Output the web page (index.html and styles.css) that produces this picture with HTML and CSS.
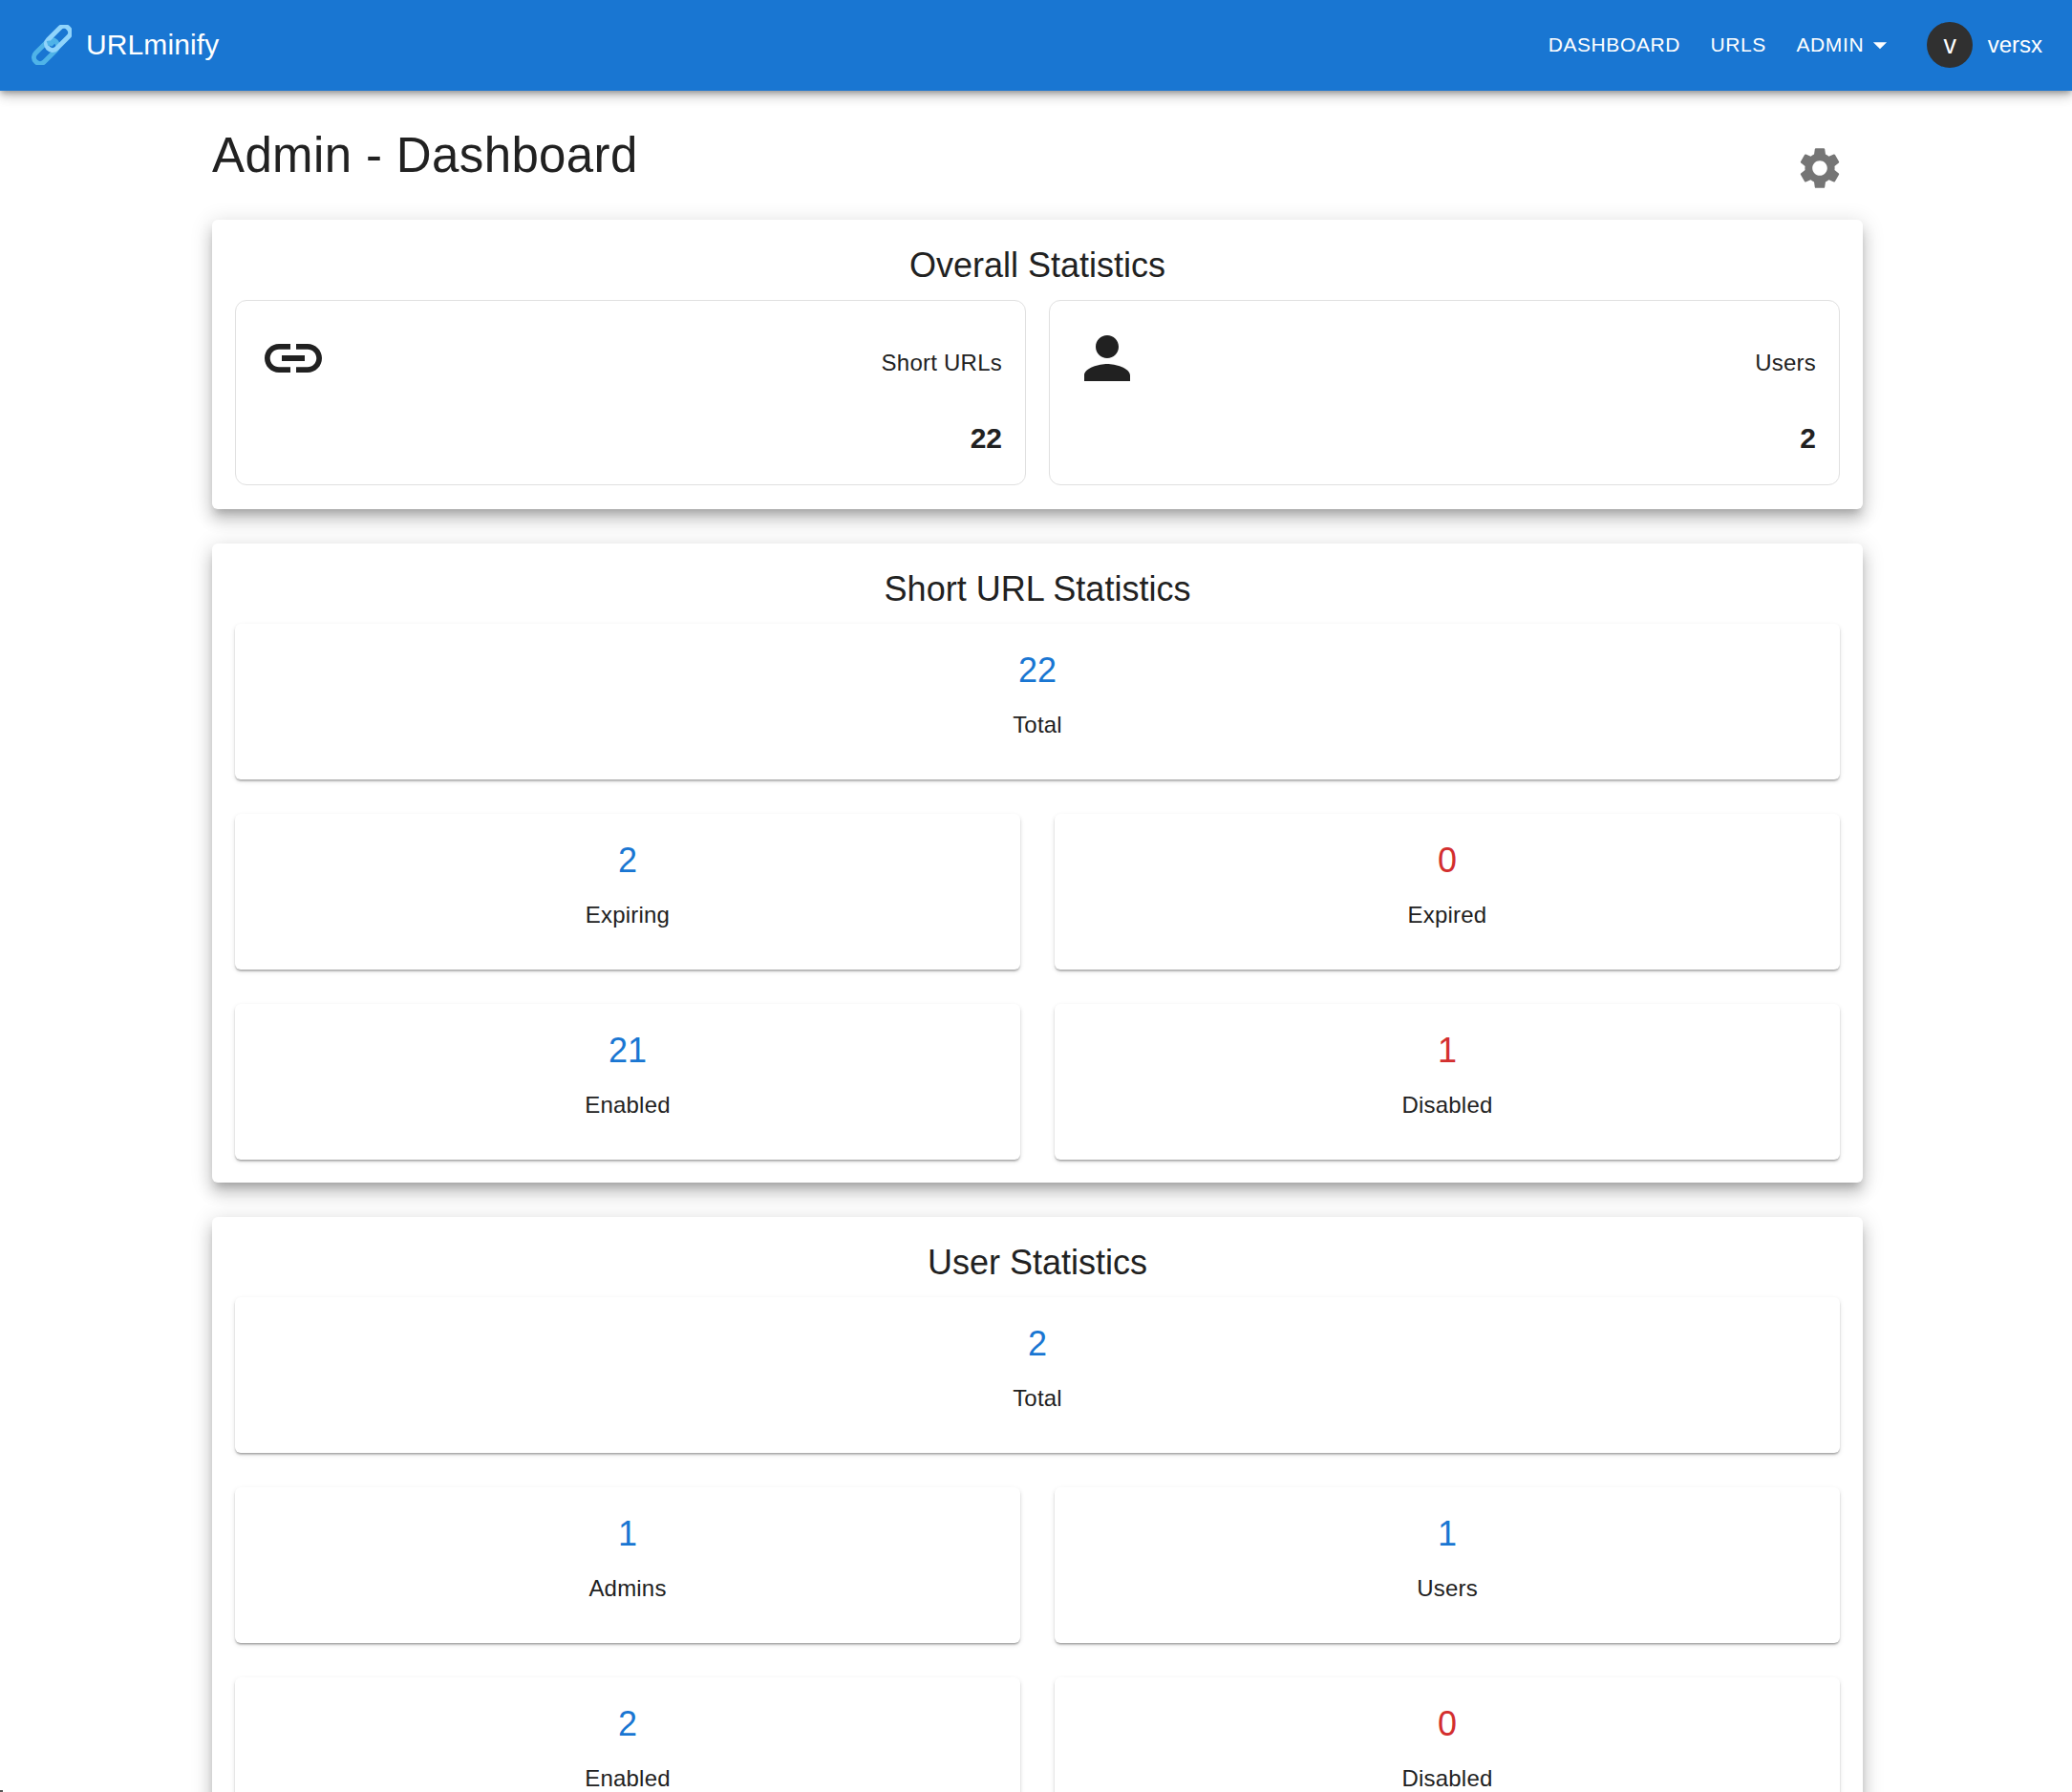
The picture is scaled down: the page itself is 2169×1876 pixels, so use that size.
FILE: index.html
```html
<!DOCTYPE html>
<html lang="en">
<head>
    <meta charset="UTF-8">
    <meta name="viewport" content="width=device-width, initial-scale=1.0">
    <title>URLminify - Admin Dashboard</title>
    <link rel="stylesheet" href="styles.css">
</head>
<body>
    <header class="appbar">
        <a class="brand" href="#">
            <svg class="brand-icon" viewBox="0 0 42 42">
                <rect class="link-back" x="-15" y="-6.5" width="30" height="13" rx="6.5" transform="translate(15 28) rotate(-45)" />
                <rect class="link-front" x="-15" y="-6.5" width="30" height="13" rx="6.5" transform="translate(28 14) rotate(-45)" />
                <path class="link-hook" d="M16.5 19.5 A6.5 6.5 0 0 1 23 21" />
            </svg>
            <span>URLminify</span>
        </a>
        <nav class="nav">
            <a href="#">Dashboard</a>
            <a href="#">URLs</a>
            <a class="nav-drop" href="#">Admin
                <svg viewBox="0 0 24 24"><path d="M7 10l5 5 5-5z" /></svg>
            </a>
        </nav>
        <div class="user">
            <span class="avatar">v</span>
            <span class="user-name">versx</span>
        </div>
    </header>

    <main class="page">
        <div class="title-row">
            <h1>Admin - Dashboard</h1>
            <svg class="gear" viewBox="0 0 24 24" aria-label="Settings">
                <path d="M19.14 12.94c.04-.3.06-.61.06-.94 0-.32-.02-.64-.07-.94l2.03-1.58c.18-.14.23-.41.12-.61l-1.92-3.32c-.12-.22-.37-.29-.59-.22l-2.39.96c-.5-.38-1.03-.7-1.62-.94l-.36-2.54c-.04-.24-.24-.41-.48-.41h-3.84c-.24 0-.43.17-.47.41l-.36 2.54c-.59.24-1.13.57-1.62.94l-2.39-.96c-.22-.08-.47 0-.59.22L2.74 8.87c-.12.21-.08.47.12.61l2.03 1.58c-.05.3-.09.63-.09.94s.02.64.07.94l-2.03 1.58c-.18.14-.23.41-.12.61l1.92 3.32c.12.22.37.29.59.22l2.39-.96c.5.38 1.03.7 1.62.94l.36 2.54c.05.24.24.41.48.41h3.84c.24 0 .44-.17.47-.41l.36-2.54c.59-.24 1.13-.56 1.62-.94l2.39.96c.22.08.47 0 .59-.22l1.92-3.32c.12-.22.07-.47-.12-.61l-2.01-1.58zM12 15.6c-1.98 0-3.6-1.62-3.6-3.6s1.62-3.6 3.6-3.6 3.6 1.62 3.6 3.6-1.62 3.6-3.6 3.6z" />
            </svg>
        </div>

        <section class="panel">
            <h2>Overall Statistics</h2>
            <div class="count-grid">
                <div class="count-card">
                    <div class="count-head">
                        <svg viewBox="0 0 24 24"><path d="M3.9 12c0-1.71 1.39-3.1 3.1-3.1h4V7H7c-2.76 0-5 2.24-5 5s2.24 5 5 5h4v-1.9H7c-1.71 0-3.1-1.39-3.1-3.1zM8 13h8v-2H8v2zm9-6h-4v1.9h4c1.71 0 3.1 1.39 3.1 3.1s-1.39 3.1-3.1 3.1h-4V17h4c2.76 0 5-2.24 5-5s-2.24-5-5-5z" /></svg>
                        <span>Short URLs</span>
                    </div>
                    <div class="count-value">22</div>
                </div>
                <div class="count-card">
                    <div class="count-head">
                        <svg viewBox="0 0 24 24"><path d="M12 12c2.21 0 4-1.79 4-4s-1.79-4-4-4-4 1.79-4 4 1.79 4 4 4zm0 2c-2.67 0-8 1.34-8 4v2h16v-2c0-2.66-5.33-4-8-4z" /></svg>
                        <span>Users</span>
                    </div>
                    <div class="count-value">2</div>
                </div>
            </div>
        </section>

        <section class="panel">
            <h2>Short URL Statistics</h2>
            <div class="stat-grid">
                <div class="stat stat-wide"><div class="stat-num">22</div><div class="stat-label">Total</div></div>
                <div class="stat"><div class="stat-num">2</div><div class="stat-label">Expiring</div></div>
                <div class="stat"><div class="stat-num red">0</div><div class="stat-label">Expired</div></div>
                <div class="stat"><div class="stat-num">21</div><div class="stat-label">Enabled</div></div>
                <div class="stat"><div class="stat-num red">1</div><div class="stat-label">Disabled</div></div>
            </div>
        </section>

        <section class="panel">
            <h2>User Statistics</h2>
            <div class="stat-grid">
                <div class="stat stat-wide"><div class="stat-num">2</div><div class="stat-label">Total</div></div>
                <div class="stat"><div class="stat-num">1</div><div class="stat-label">Admins</div></div>
                <div class="stat"><div class="stat-num">1</div><div class="stat-label">Users</div></div>
                <div class="stat"><div class="stat-num">2</div><div class="stat-label">Enabled</div></div>
                <div class="stat"><div class="stat-num red">0</div><div class="stat-label">Disabled</div></div>
            </div>
        </section>
    </main>
    <div class="corner-speck"></div>
</body>
</html>
```

FILE: styles.css
```css
html {
    height: 100%;
    overflow: hidden;
}
body {
    margin: 0;
    height: 100%;
    overflow: hidden;
    background: #ffffff;
    color: #212121;
    font-family: "Liberation Sans", Arial, sans-serif;
    font-size: 24px;
    line-height: 36px;
}

/* top bar */
.appbar {
    position: relative;
    z-index: 2;
    display: flex;
    align-items: center;
    box-sizing: border-box;
    height: 95px;
    padding: 0 31px 1px 33px;
    background: #1976d2;
    color: #ffffff;
    box-shadow: 0 3px 6px -1px rgba(0, 0, 0, 0.3), 0 6px 12px 0 rgba(0, 0, 0, 0.14), 0 2px 15px 0 rgba(0, 0, 0, 0.12);
}
.brand {
    display: flex;
    align-items: center;
    gap: 15px;
    margin-right: auto;
    color: inherit;
    text-decoration: none;
    font-size: 30px;
    letter-spacing: 0.1px;
}
.brand-icon {
    width: 42px;
    height: 42px;
}
.link-back, .link-front, .link-hook {
    fill: none;
    stroke-width: 5;
}
.link-back { stroke: #4fb3e8; }
.link-front { stroke: #90d4fb; }
.link-hook { stroke: #4fb3e8; }
.nav {
    display: flex;
    align-items: center;
    gap: 31.5px;
}
.nav a {
    color: inherit;
    text-decoration: none;
    text-transform: uppercase;
    font-size: 21px;
    letter-spacing: 0.6px;
}
.nav-drop {
    display: flex;
    align-items: center;
}
.nav-drop svg {
    width: 34px;
    height: 34px;
    fill: #ffffff;
}
.user {
    display: flex;
    align-items: center;
    gap: 15.5px;
    margin-left: 32px;
}
.avatar {
    display: flex;
    align-items: center;
    justify-content: center;
    width: 48px;
    height: 48px;
    border-radius: 50%;
    background: #303030;
    font-size: 27px;
}

/* page */
.page {
    margin: 0 219px 0 222px;
}
.title-row {
    display: flex;
    justify-content: space-between;
    height: 135px;
}
.title-row h1 {
    margin: 38px 0 0;
    font-size: 51px;
    font-weight: 400;
    line-height: 60px;
    letter-spacing: 0.37px;
}
.gear {
    width: 52px;
    height: 52px;
    margin: 55px 19px 0 0;
    fill: #757575;
}
.panel {
    margin-bottom: 36px;
    padding: 24px;
    border-radius: 6px;
    background: #ffffff;
    box-shadow: 0 7px 8px -4px rgba(0, 0, 0, 0.2), 0 12px 15px 1px rgba(0, 0, 0, 0.14), 0 4px 21px 3px rgba(0, 0, 0, 0.12);
}
.panel h2 {
    margin: 0 0 12px;
    font-size: 36px;
    font-weight: 400;
    line-height: 48px;
    text-align: center;
}

/* overall cards */
.count-grid {
    display: grid;
    grid-template-columns: 1fr 1fr;
    gap: 24px;
    margin: 1px 0;
}
.count-card {
    padding: 24px 24px 30px;
    border: 1px solid #e0e0e0;
    border-radius: 12px;
}
.count-head {
    display: flex;
    justify-content: space-between;
    align-items: center;
}
.count-head svg {
    width: 72px;
    height: 72px;
    fill: #212121;
}
.count-head span {
    margin-top: 10px;
    letter-spacing: 0.24px;
}
.count-value {
    margin-top: 30px;
    font-size: 30px;
    font-weight: 700;
    text-align: right;
}

/* stat cards */
.stat-grid {
    display: grid;
    grid-template-columns: 1fr 1fr;
    gap: 36px;
}
.stat {
    padding: 25px 24px 39px;
    border-radius: 6px;
    background: #ffffff;
    text-align: center;
    box-shadow: 0 2px 2px -1px rgba(0, 0, 0, 0.2), 0 2px 2px 0 rgba(0, 0, 0, 0.14), 0 2px 5px 0 rgba(0, 0, 0, 0.12);
}
.stat-wide {
    grid-column: 1 / -1;
}
.stat-num {
    margin-bottom: 15px;
    color: #1976d2;
    font-size: 36px;
    line-height: 48px;
}
.stat-num.red {
    color: #d32f2f;
}
.stat-label {
    letter-spacing: 0.2px;
}
.corner-speck {
    position: fixed;
    left: 0;
    bottom: 0;
    width: 3px;
    height: 2px;
    background: #555555;
}
```
